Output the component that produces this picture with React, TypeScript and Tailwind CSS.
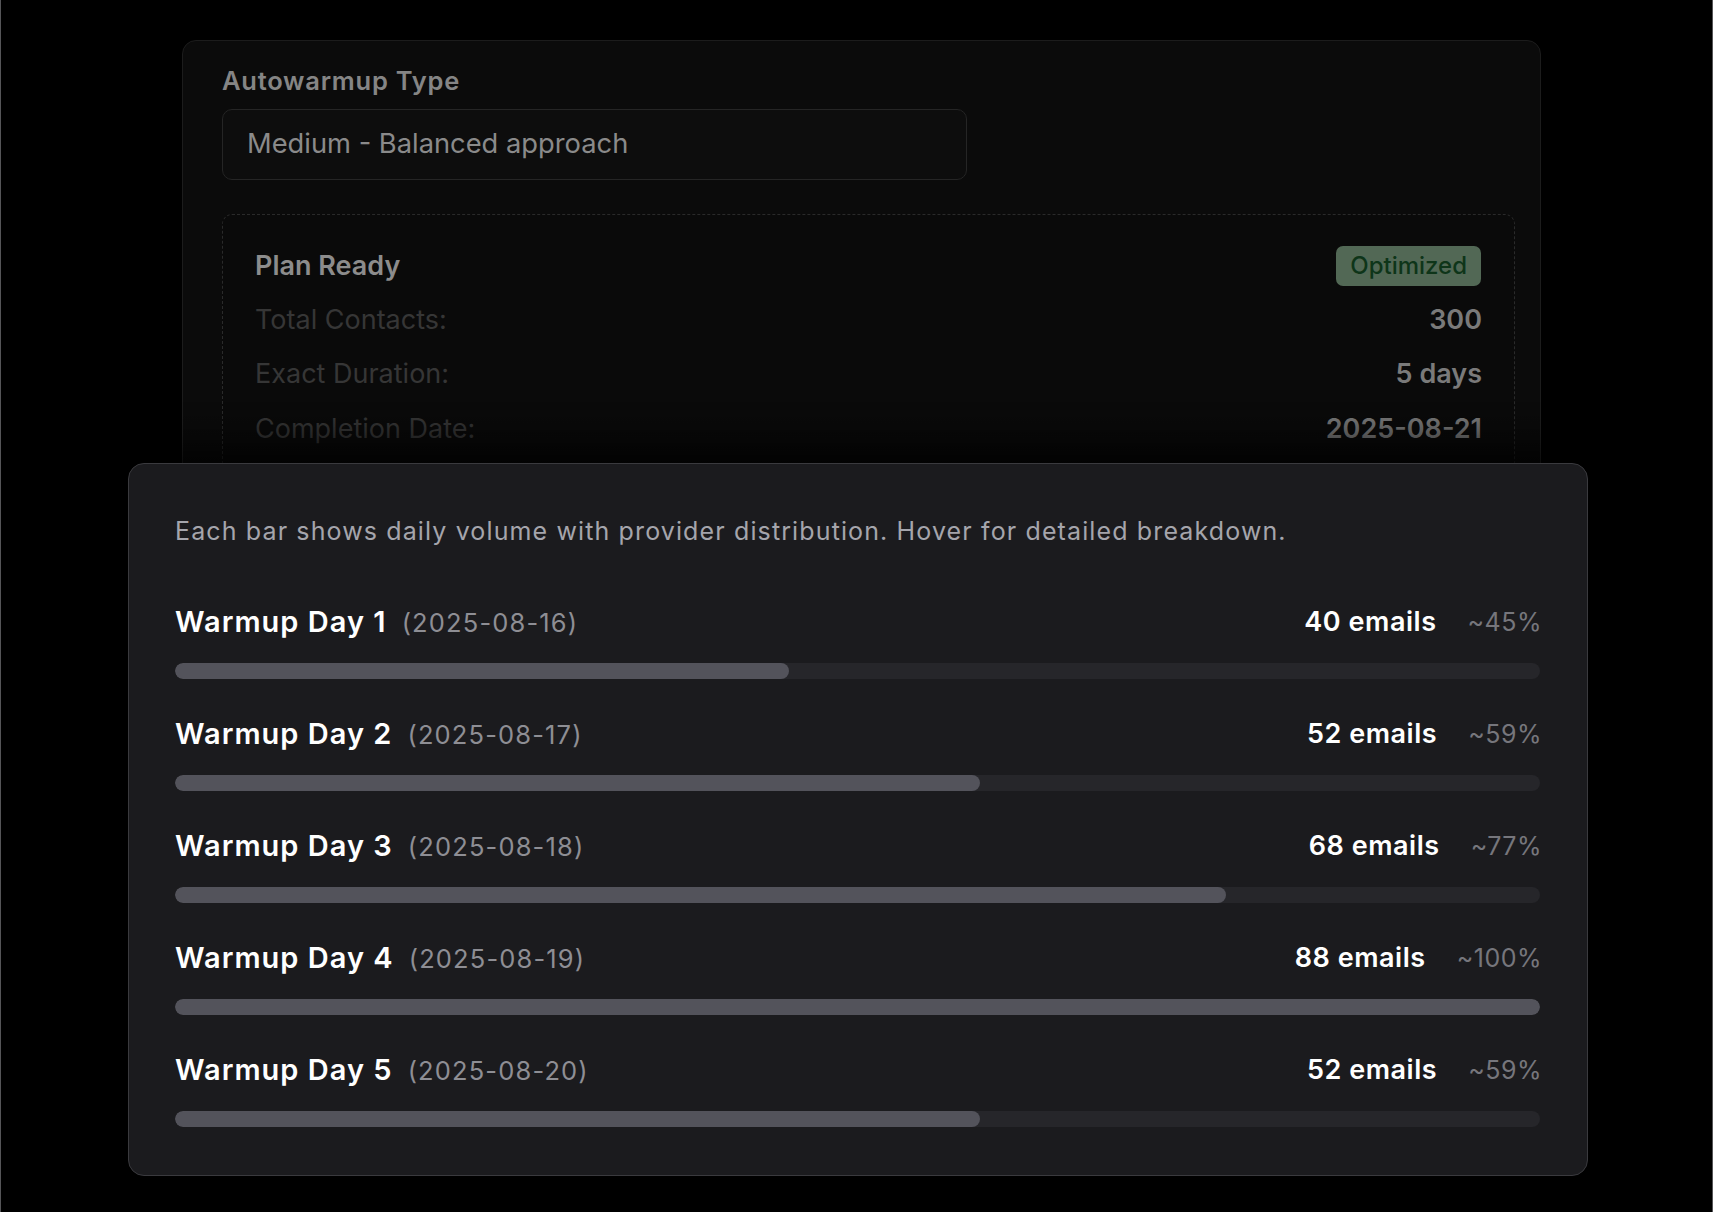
import React from "react";

type WarmupDay = {
  day: number;
  date: string;
  emails: number;
  percent: number;
};

const days: WarmupDay[] = [
  { day: 1, date: "2025-08-16", emails: 40, percent: 45 },
  { day: 2, date: "2025-08-17", emails: 52, percent: 59 },
  { day: 3, date: "2025-08-18", emails: 68, percent: 77 },
  { day: 4, date: "2025-08-19", emails: 88, percent: 100 },
  { day: 5, date: "2025-08-20", emails: 52, percent: 59 },
];

const summary = [
  { label: "Total Contacts:", value: "300" },
  { label: "Exact Duration:", value: "5 days" },
  { label: "Completion Date:", value: "2025-08-21" },
];

export default function App() {
  return (
    <div className="min-h-[1212px] border-x border-[#555558] bg-black pt-[40px] font-['Inter',sans-serif]">
      <SettingsCard />
      <ScheduleCard />
    </div>
  );
}

function SettingsCard() {
  return (
    <div className="relative ml-[181px] h-[460px] w-[1359px] overflow-hidden rounded-[14px] border border-[#1c1c1c] bg-[#0b0b0b] px-[39px] pt-[22px]">
      <label className="block">
        <span className="block text-[25.5px] leading-[35px] font-semibold tracking-[0.03em] text-[#858585]">Autowarmup Type</span>
        <div className="mt-[11px] flex h-[71px] w-[745px] items-center rounded-[10px] border border-[#252525] bg-[#0d0d0d] px-[24px] text-[27.3px] text-[#8a8a8a]">
          Medium - Balanced approach
        </div>
      </label>

      <div className="mt-[34px] w-[1293px] rounded-[10px] border border-dashed border-[#2a2a2a] bg-[#0a0a0a] px-[32px] pt-[30px] pb-[40px]">
        <div className="flex h-[42px] items-center justify-between">
          <span className="text-[27px] font-semibold text-[#8c8c8c]">Plan Ready</span>
          <span className="mr-[1px] rounded-[7px] bg-[#526855] px-[14px] py-[2px] text-[24px] font-medium text-[#0e3519]">Optimized</span>
        </div>
        <div className="mt-[12px] flex flex-col gap-[12.5px]">
          {summary.map((row) => (
            <div key={row.label} className="flex h-[42px] items-center justify-between text-[27px]">
              <span className="text-[#363636]">{row.label}</span>
              <span className="font-semibold text-[#7a7a7a]">{row.value}</span>
            </div>
          ))}
        </div>
      </div>

      <div className="pointer-events-none absolute inset-x-0 bottom-0 h-[90px] bg-gradient-to-b from-transparent to-black/60" />
    </div>
  );
}

function ScheduleCard() {
  return (
    <div className="relative z-10 -mt-[37px] ml-[127px] w-[1460px] rounded-[16px] border border-[#3a3a3e] bg-[#1b1b1e] pt-[50px] pr-[47px] pb-[48px] pl-[46px] shadow-[0_-12px_40px_rgba(0,0,0,0.75)]">
      <p className="text-[25px] leading-[35px] tracking-[0.045em] text-[#a5a5ac]">
        Each bar shows daily volume with provider distribution. Hover for detailed breakdown.
      </p>

      <div className="mt-[52px] flex flex-col gap-[34px]">
        {days.map((d) => (
          <DayRow key={d.day} item={d} />
        ))}
      </div>
    </div>
  );
}

function DayRow({ item }: { item: WarmupDay }) {
  return (
    <div>
      <div className="flex h-[42px] items-center justify-between">
        <div className="flex items-baseline gap-[15px]">
          <span className="text-[29px] font-semibold tracking-[0.035em] text-white">Warmup Day {item.day}</span>
          <span className="text-[25.5px] tracking-[0.045em] text-[#8e8e94]">({item.date})</span>
        </div>
        <div className="-mr-[2px] flex items-baseline gap-[31px]">
          <span className="text-[27px] font-semibold tracking-[0.02em] text-white">{item.emails} emails</span>
          <span className="text-[25px] tracking-[0.02em] text-[#76767c]">~{item.percent}%</span>
        </div>
      </div>
      <div className="mt-[20px] h-[16px] w-full overflow-hidden rounded-full bg-[#26262a]">
        <div className="h-full rounded-full bg-[#53535b]" style={{ width: `${item.percent}%` }} />
      </div>
    </div>
  );
}
